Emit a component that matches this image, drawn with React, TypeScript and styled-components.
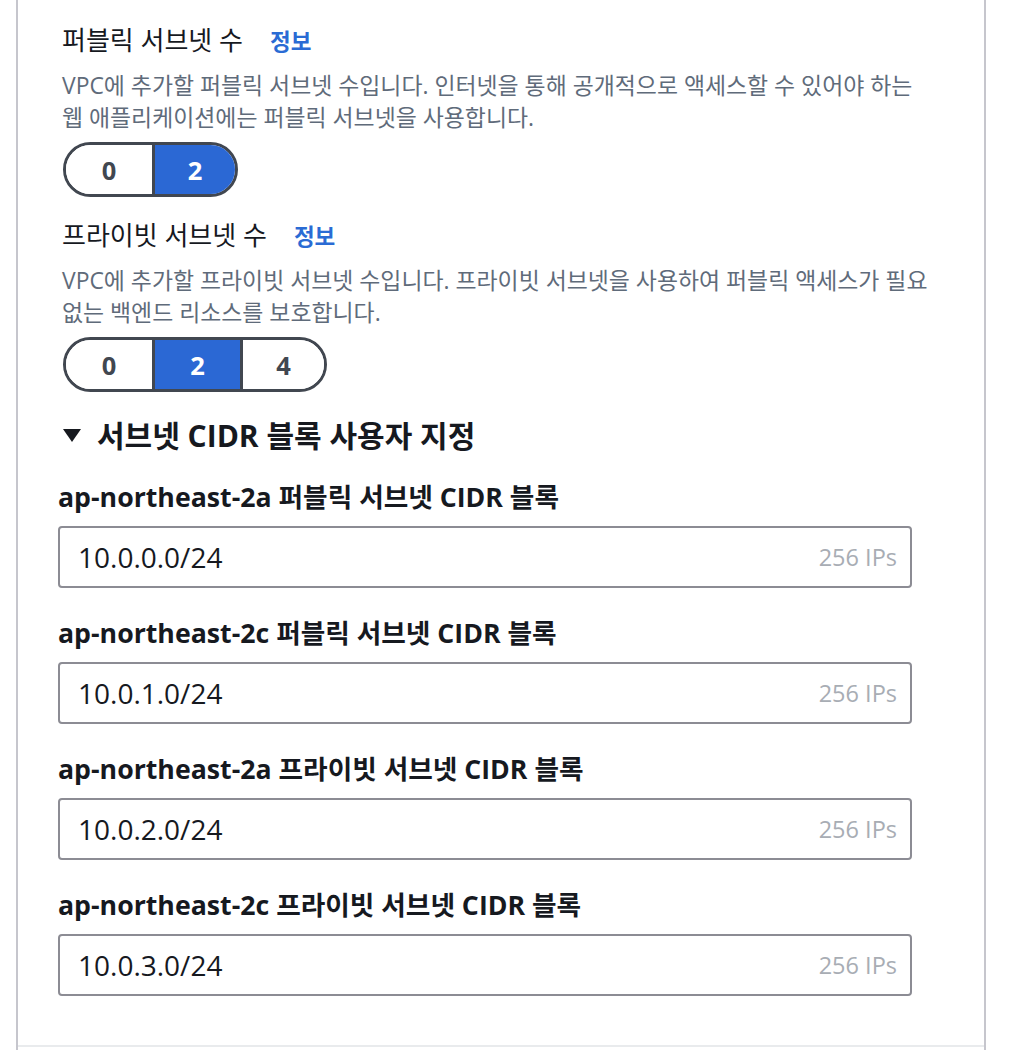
import React from "react";
import styled, { createGlobalStyle } from "styled-components";

const GlobalStyle = createGlobalStyle`
  html, body { margin: 0; padding: 0; background: #ffffff; }
  body { font-family: "Open Sans", "Noto Sans CJK KR", sans-serif; color: #16191f; }
`;

const Panel = styled.div`
  margin-left: 16px;
  width: 966px;
  height: 1050px;
  border-left: 2px solid #c6c6cd;
  border-right: 2px solid #c6c6cd;
  display: flex;
  flex-direction: column;
  box-sizing: content-box;
`;

const Content = styled.div`
  flex: 1;
  padding: 24px 0 0 44px;
  display: flex;
  flex-direction: column;
`;

const Divider = styled.div`
  height: 2px;
  background: #e9ebed;
  margin-bottom: 3px;
`;

const LabelRow = styled.div`
  display: flex;
  align-items: baseline;
  gap: 27px;
  font-size: 26px;
  line-height: 32px;
  color: #16191f;
`;

const InfoLink = styled.span`
  font-size: 22.5px;
  font-weight: 700;
  color: #2a6bd4;
`;

const Description = styled.div`
  margin-top: 12px;
  font-size: 22.9px;
  line-height: 32px;
  color: #5f6b7a;
  white-space: nowrap;
`;

const Segmented = styled.div`
  margin-top: 8px;
  margin-left: 1px;
  display: inline-flex;
  align-self: flex-start;
  height: 55px;
  border: 3px solid #414750;
  border-radius: 30px;
  overflow: hidden;
  box-sizing: border-box;
`;

const Segment = styled.div<{ $selected?: boolean; $w: number }>`
  width: ${(p) => p.$w}px;
  display: flex;
  align-items: center;
  justify-content: center;
  font-size: 25.5px;
  font-weight: 700;
  color: ${(p) => (p.$selected ? "#ffffff" : "#414750")};
  background: ${(p) => (p.$selected ? "#2b68d4" : "#ffffff")};
  & + & {
    border-left: 3px solid #414750;
  }
`;

const Group = styled.div<{ $top?: number }>`
  display: flex;
  flex-direction: column;
  margin-top: ${(p) => p.$top ?? 0}px;
`;

const ExpandHeader = styled.div`
  margin-top: 26px;
  margin-left: 1px;
  display: flex;
  align-items: center;
  gap: 16px;
  font-size: 30px;
  font-weight: 700;
  line-height: 36px;
  color: #16191f;
`;

const Caret = styled.svg`
  width: 18px;
  height: 14px;
  flex: none;
`;

const Fields = styled.div`
  margin-left: -4px;
  margin-top: 26px;
  display: flex;
  flex-direction: column;
  gap: 28px;
  width: 854px;
`;

const Field = styled.div`
  display: flex;
  flex-direction: column;
  gap: 12px;
`;

const FieldLabel = styled.div`
  font-size: 26.7px;
  font-weight: 700;
  line-height: 34px;
  color: #16191f;
`;

const InputBox = styled.div`
  height: 62px;
  box-sizing: border-box;
  border: 2px solid #8c8c94;
  border-radius: 4px;
  display: flex;
  align-items: center;
  justify-content: space-between;
  padding: 0 13px 0 18px;
`;

const InputValue = styled.span`
  font-size: 28px;
  color: #16191f;
`;

const InputHint = styled.span`
  font-size: 23.5px;
  color: #a8adb4;
`;

const fields = [
  { label: "ap-northeast-2a 퍼블릭 서브넷 CIDR 블록", value: "10.0.0.0/24" },
  { label: "ap-northeast-2c 퍼블릭 서브넷 CIDR 블록", value: "10.0.1.0/24" },
  { label: "ap-northeast-2a 프라이빗 서브넷 CIDR 블록", value: "10.0.2.0/24" },
  { label: "ap-northeast-2c 프라이빗 서브넷 CIDR 블록", value: "10.0.3.0/24" },
];

export default function App() {
  return (
    <>
      <GlobalStyle />
      <Panel>
        <Content>
          <Group>
            <LabelRow>
              <span>퍼블릭 서브넷 수</span>
              <InfoLink>정보</InfoLink>
            </LabelRow>
            <Description>
              VPC에 추가할 퍼블릭 서브넷 수입니다. 인터넷을 통해 공개적으로 액세스할 수 있어야 하는
              <br />
              웹 애플리케이션에는 퍼블릭 서브넷을 사용합니다.
            </Description>
            <Segmented>
              <Segment $w={86}>0</Segment>
              <Segment $w={80} $selected>
                2
              </Segment>
            </Segmented>
          </Group>
          <Group $top={22}>
            <LabelRow>
              <span>프라이빗 서브넷 수</span>
              <InfoLink>정보</InfoLink>
            </LabelRow>
            <Description>
              VPC에 추가할 프라이빗 서브넷 수입니다. 프라이빗 서브넷을 사용하여 퍼블릭 액세스가 필요
              <br />
              없는 백엔드 리소스를 보호합니다.
            </Description>
            <Segmented>
              <Segment $w={86}>0</Segment>
              <Segment $w={85} $selected>
                2
              </Segment>
              <Segment $w={81}>4</Segment>
            </Segmented>
          </Group>
          <ExpandHeader>
            <Caret viewBox="0 0 18 14">
              <polygon points="0,0 18,0 9,13" fill="#16191f" />
            </Caret>
            <span>서브넷 CIDR 블록 사용자 지정</span>
          </ExpandHeader>
          <Fields>
            {fields.map((f) => (
              <Field key={f.label}>
                <FieldLabel>{f.label}</FieldLabel>
                <InputBox>
                  <InputValue>{f.value}</InputValue>
                  <InputHint>256 IPs</InputHint>
                </InputBox>
              </Field>
            ))}
          </Fields>
        </Content>
        <Divider />
      </Panel>
    </>
  );
}
